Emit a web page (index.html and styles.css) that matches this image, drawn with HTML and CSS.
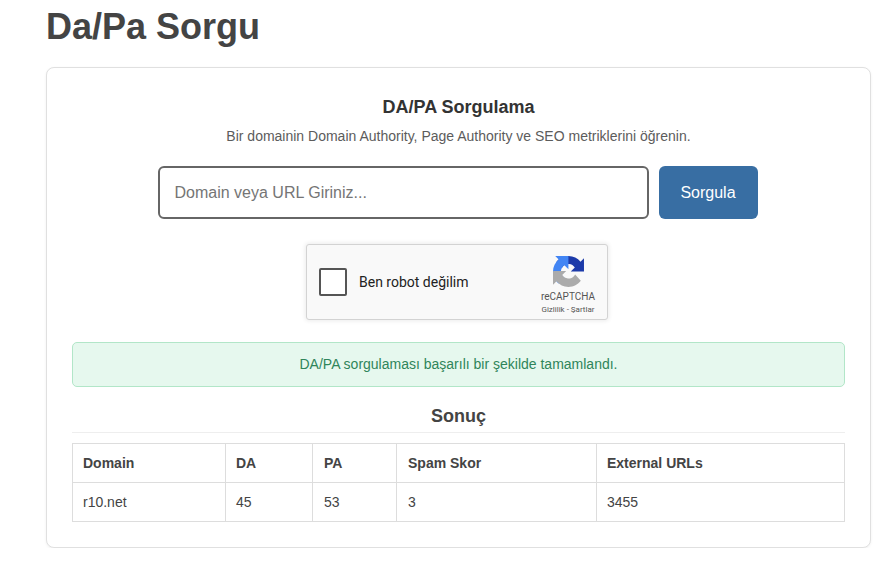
FILE: index.html
```html
<!DOCTYPE html>
<html lang="tr">
<head>
<meta charset="utf-8">
<title>Da/Pa Sorgu</title>
<link rel="stylesheet" href="styles.css">
</head>
<body>
<main class="page">
  <h1 class="page-title">Da/Pa Sorgu</h1>
  <section class="card">
    <h2 class="card-title">DA/PA Sorgulama</h2>
    <p class="card-desc">Bir domainin Domain Authority, Page Authority ve SEO metriklerini öğrenin.</p>
    <form class="query-form">
      <input class="query-input" type="text" placeholder="Domain veya URL Giriniz...">
      <button class="query-btn" type="button">Sorgula</button>
    </form>
    <div class="captcha-wrap">
      <div class="captcha">
        <span class="captcha-box"></span>
        <span class="captcha-label">Ben robot değilim</span>
        <div class="captcha-brand">
          <svg class="captcha-logo" viewBox="0 0 64 64" width="31" height="31" aria-hidden="true">
            <path fill="#1c3aa9" d="M64 31.955l-.033-1.37V4.687l-7.16 7.16C50.948 4.674 42.033.093 32.05.093c-10.4 0-19.622 4.96-25.458 12.64l11.736 11.86a15.55 15.55 0 0 1 4.754-5.334c2.05-1.6 4.952-2.906 8.968-2.906.485 0 .86.057 1.135.163 4.976.393 9.288 3.14 11.828 7.124l-8.307 8.307 26.3.001"/>
            <path fill="#4285f4" d="M31.862 0l-1.37.033H4.594l7.16 7.16C4.58 13.052 0 21.967 0 31.95c0 10.4 4.96 19.622 12.64 25.458l11.86-11.736a15.55 15.55 0 0 1-5.334-4.754c-1.6-2.05-2.906-4.952-2.906-8.968 0-.485.057-.86.163-1.135.393-4.976 3.14-9.288 7.124-11.828l8.307 8.307L31.862 0"/>
            <path fill="#ababab" d="M.001 31.955l.033 1.37v25.9l7.16-7.16c5.86 7.173 14.775 11.754 24.76 11.754 10.4 0 19.622-4.96 25.458-12.64L45.676 38.32a15.55 15.55 0 0 1-4.754 5.334c-2.05 1.6-4.952 2.906-8.968 2.906-.485 0-.86-.057-1.135-.163-4.976-.393-9.288-3.14-11.828-7.124l8.307-8.307-26.3.001"/>
          </svg>
          <span class="captcha-name">reCAPTCHA</span>
          <span class="captcha-links">Gizlilik - Şartlar</span>
        </div>
      </div>
    </div>
    <div class="alert">DA/PA sorgulaması başarılı bir şekilde tamamlandı.</div>
    <h3 class="result-title">Sonuç</h3>
    <table class="result-table">
      <thead>
        <tr>
          <th class="col-domain">Domain</th>
          <th class="col-da">DA</th>
          <th class="col-pa cell-wide">PA</th>
          <th class="col-spam cell-wide">Spam Skor</th>
          <th>External URLs</th>
        </tr>
      </thead>
      <tbody>
        <tr>
          <td>r10.net</td>
          <td>45</td>
          <td class="cell-wide">53</td>
          <td class="cell-wide">3</td>
          <td>3455</td>
        </tr>
      </tbody>
    </table>
  </section>
</main>
</body>
</html>
```
FILE: styles.css
```css
* { box-sizing: border-box; }
html, body { margin: 0; background: #fff; }
body {
  font-family: "Liberation Sans", Arial, sans-serif;
  color: #444;
  overflow: hidden;
}
.page { padding: 0 14px 0 46px; }
.page-title {
  margin: 0;
  padding-top: 6px;
  font-size: 36px;
  line-height: 41px;
  font-weight: 700;
  color: #444;
}
.card {
  margin-top: 20px;
  padding: 25px;
  height: 481px;
  background: #fff;
  border: 1px solid #e0e0e0;
  border-radius: 8px;
  box-shadow: 0 1px 3px rgba(0,0,0,.06);
}
.card-title {
  margin: 4px 0 0;
  text-align: center;
  font-size: 18px;
  line-height: 21px;
  font-weight: 700;
  color: #333;
}
.card-desc {
  margin: 10px 0 0;
  text-align: center;
  font-size: 14px;
  line-height: 16px;
  color: #5c5c5c;
}
.query-form {
  display: flex;
  justify-content: center;
  gap: 10px;
  margin-top: 22px;
  padding-right: 2px;
}
.query-input {
  width: 491px;
  height: 53px;
  padding: 0 15px;
  border: 2px solid #666;
  border-radius: 6px;
  background: #fff;
  font: 16px "Liberation Sans", Arial, sans-serif;
  color: #444;
  outline: 0;
}
.query-input::placeholder { color: #757575; opacity: 1; }
.query-btn {
  width: 99px;
  height: 53px;
  border: 0;
  border-radius: 6px;
  background: #386ea3;
  color: #fff;
  font: 16px "Liberation Sans", Arial, sans-serif;
}
.captcha-wrap {
  display: flex;
  justify-content: center;
  margin-top: 25px;
  padding-right: 3px;
}
.captcha {
  display: flex;
  align-items: center;
  width: 302px;
  height: 76px;
  padding: 0 12px 0 12px;
  background: #f9f9f9;
  border: 1px solid #d3d3d3;
  border-radius: 3px;
  box-shadow: 0 0 4px 1px rgba(0,0,0,.08);
}
.captcha-box {
  width: 28px;
  height: 28px;
  background: #fff;
  border: 2px solid #555;
  border-radius: 2px;
}
.captcha-label {
  margin-left: 12px;
  font: 14px Roboto, sans-serif;
  color: #222;
}
.captcha-brand {
  display: flex;
  flex-direction: column;
  align-items: center;
  margin-left: auto;
  padding-top: 6px;
  font-family: Roboto, sans-serif;
  color: #555;
}
.captcha-logo { display: block; margin: 0 0 3px 2px; }
.captcha-name { font-size: 10px; line-height: 13px; }
.captcha-links { margin-top: 1px; font-size: 8px; line-height: 11px; }
.alert {
  margin-top: 22px;
  height: 45px;
  line-height: 43px;
  text-align: center;
  font-size: 14px;
  color: #2f855a;
  background: #e6f8ee;
  border: 1px solid #b2e6c8;
  border-radius: 5px;
}
.result-title {
  margin: 19px 0 0;
  padding-bottom: 5px;
  text-align: center;
  font-size: 18px;
  line-height: 21px;
  font-weight: 700;
  color: #444;
  border-bottom: 1px solid #eee;
}
.result-table {
  width: 100%;
  margin-top: 10px;
  table-layout: fixed;
  border-collapse: collapse;
  font-size: 14px;
  color: #444;
}
.result-table th, .result-table td {
  height: 39px;
  padding: 0 10px;
  text-align: left;
  border: 1px solid #ddd;
}
.result-table th { font-weight: 700; }
.result-table .cell-wide { padding-left: 11px; }
.col-domain { width: 153px; }
.col-da { width: 87px; }
.col-pa { width: 84px; }
.col-spam { width: 200px; }
```
